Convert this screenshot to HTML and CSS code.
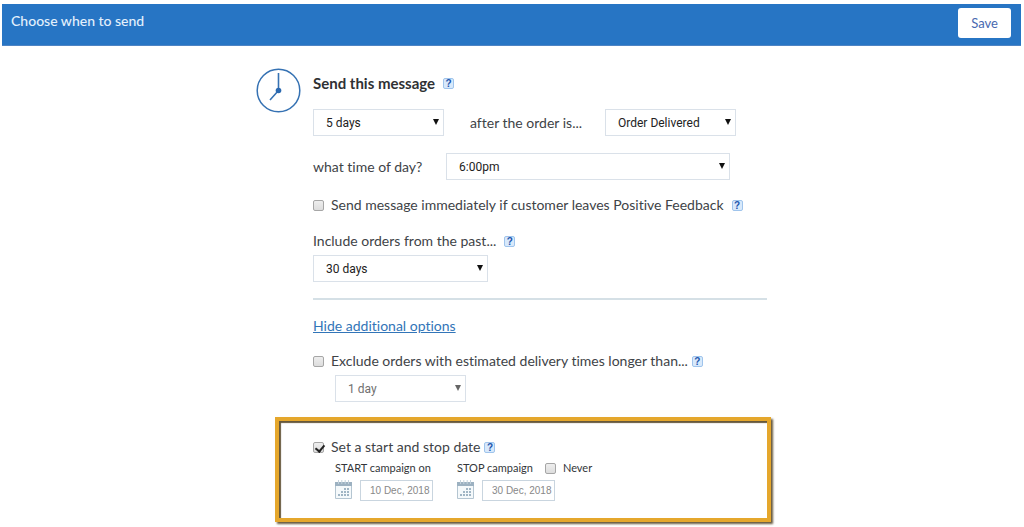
FILE: index.html
```html
<!DOCTYPE html>
<html lang="en">
<head>
<meta charset="utf-8">
<meta name="viewport" content="width=device-width, initial-scale=1">
<title>Choose when to send</title>
<link rel="stylesheet" href="styles.css">
</head>
<body>
<header class="topbar">
  <h1 class="topbar-title">Choose when to send</h1>
  <button class="save" type="button">Save</button>
</header>
<main class="panel">
  <svg class="clock" viewBox="0 0 45 45" aria-hidden="true">
    <circle cx="22.500" cy="22.500" r="21.300" fill="none" stroke="#3672b3" stroke-width="1.500"/>
    <path d="M22.500 5V22.500L14 32" fill="none" stroke="#3672b3" stroke-width="1.600"/>
    <circle cx="22.500" cy="22.500" r="2.800" fill="#2b69b0"/>
  </svg>
  <form class="options">
    <div class="line">
      <h2 class="heading">Send this message</h2>
      <button class="help help-wide" type="button" aria-label="Help with sending">?</button>
    </div>
    <div class="line send-row">
      <span class="select small"><select id="delay" aria-label="Delay"><option>5 days</option></select></span>
      <label class="after" for="event">after the order is...</label>
      <span class="select small"><select id="event"><option>Order Delivered</option></select></span>
    </div>
    <div class="line time-row">
      <label class="time-label" for="time">what time of day?</label>
      <span class="select grow"><select id="time"><option>6:00pm</option></select></span>
    </div>
    <div class="line feedback-row">
      <input class="check" type="checkbox" id="feedback">
      <label for="feedback">Send message immediately if customer leaves Positive Feedback</label>
      <button class="help help-wide" type="button" aria-label="Help with feedback">?</button>
    </div>
    <div class="line past-row">
      <label for="past">Include orders from the past...</label>
      <button class="help help-wide" type="button" aria-label="Help with past orders">?</button>
    </div>
    <span class="select medium"><select id="past"><option>30 days</option></select></span>
    <hr class="rule">
    <div class="line"><a class="toggle" href="#more">Hide additional options</a></div>
    <div class="line exclude-row" id="more">
      <input class="check" type="checkbox" id="exclude">
      <label for="exclude">Exclude orders with estimated delivery times longer than...</label>
      <button class="help" type="button" aria-label="Help with delivery times">?</button>
    </div>
    <span class="select small indent muted"><select aria-label="Delivery time" disabled><option>1 day</option></select></span>
    <section class="highlight">
      <div class="line">
        <input class="check" type="checkbox" id="dates" checked>
        <label for="dates">Set a start and stop date</label>
        <button class="help" type="button" aria-label="Help with dates">?</button>
      </div>
      <div class="dates">
        <div class="date">
          <div class="date-head"><label for="start">START campaign on</label></div>
          <div class="date-field">
            <svg class="calendar" viewBox="0 0 17 19" aria-hidden="true"><path d="M.5 2.500h16v16H.5z" fill="#f5f9fb" stroke="#b4c5d1"/><path d="M0 2h17v4H0z" fill="#9cb1c1"/><path d="M3.500 0v4M6.800 0v4M10.200 0v4M13.500 0v4" stroke="#c3d2dc"/><path d="M9 9h2M12 9h2M6 12h2M9 12h2M12 12h2M3 15h2M6 15h2M9 15h2M12 15h2" stroke="#a0b5c4" stroke-width="2"/></svg>
            <input class="date-input" id="start" type="text" value="10 Dec, 2018">
          </div>
        </div>
        <div class="date">
          <div class="date-head"><label for="stop">STOP campaign</label><input class="check" type="checkbox" id="never"><label for="never">Never</label></div>
          <div class="date-field">
            <svg class="calendar" viewBox="0 0 17 19" aria-hidden="true"><path d="M.5 2.500h16v16H.5z" fill="#f5f9fb" stroke="#b4c5d1"/><path d="M0 2h17v4H0z" fill="#9cb1c1"/><path d="M3.500 0v4M6.800 0v4M10.200 0v4M13.500 0v4" stroke="#c3d2dc"/><path d="M9 9h2M12 9h2M6 12h2M9 12h2M12 12h2M3 15h2M6 15h2M9 15h2M12 15h2" stroke="#a0b5c4" stroke-width="2"/></svg>
            <input class="date-input" id="stop" type="text" value="30 Dec, 2018">
          </div>
        </div>
      </div>
    </section>
  </form>
</main>
</body>
</html>
```
FILE: styles.css
```css
* { box-sizing: border-box; }
body {
  margin: 4px 3px 0 2px;
  background: #fff;
  color: #404347;
  font: 14px/20px Lato, "Open Sans", sans-serif;
  font-variant-ligatures: none;
}
button, input, select { margin: 0; font: inherit; }
.topbar {
  display: flex;
  align-items: center;
  justify-content: space-between;
  padding: 4px 10px 8px 9px;
  background: #2775c4;
  box-shadow: inset 0 -1px #4e84c4;
}
.topbar-title {
  margin: 0;
  padding-bottom: 4px;
  color: #e3f0fc;
  font-size: 14px;
  font-weight: 500;
}
.save {
  padding: 5px 13px;
  border: 0;
  border-radius: 3px;
  background: #fff;
  color: #4869b0;
  font-size: 13px;
}
.panel {
  display: flex;
  gap: 12px;
  max-width: 511px;
  margin: 0 auto;
  padding: 22px 0 5px;
}
.clock { flex: none; width: 45px; height: 45px; }
.options {
  flex: 1;
  display: flex;
  flex-direction: column;
  align-items: flex-start;
  min-width: 0;
  padding-top: 5px;
}
.line { display: flex; align-items: center; }
.heading { margin: 0; color: #2f3134; font-size: 14px; font-weight: 700; }
.line .heading { font-size: 15px; line-height: 20px; }
.help {
  width: 11px;
  height: 11px;
  margin-left: 4px;
  padding: 0;
  border: 1px solid #9fc4ec;
  border-radius: 2px;
  background: #d8e9fb;
  color: #1c55ad;
  font: bold 10px/9px "Liberation Sans", Arial, sans-serif;
  text-align: center;
}
.help-wide { margin-left: 8px; }
.select { position: relative; display: block; }
.select::after {
  content: "";
  position: absolute;
  top: 10px;
  right: 5px;
  width: 6px;
  height: 6px;
  background: #111;
  clip-path: polygon(0 0, 100% 0, 50% 100%);
  pointer-events: none;
}
.select select {
  appearance: none;
  display: block;
  width: 100%;
  height: 27px;
  padding: 0 16px 0 12px;
  border: 1px solid #dae1e9;
  border-radius: 0;
  background: #fff;
  color: #222;
  font: 12px/20px Roboto, Arial, sans-serif;
}
.small { width: 131px; }
.medium { width: 175px; margin-top: 4px; }
.grow { flex: 1; }
.indent { margin: 4px 0 0 22px; }
.muted select { color: #707070; opacity: 1; }
.muted::after { background: #666; }
.send-row { margin-top: 16px; }
.after { width: 161px; padding-left: 26px; }
.time-row { align-self: stretch; margin: 17px 37px 0 0; }
.time-label { width: 133px; }
.feedback-row { margin-top: 15px; }
.past-row { margin-top: 16px; }
.check {
  appearance: none;
  flex: none;
  width: 11px;
  height: 11px;
  margin-right: 7px;
  border: 1px solid #a6a6a6;
  border-radius: 2px;
  background: linear-gradient(#eee, #ddd);
}
.check:checked::after {
  content: "";
  display: block;
  width: 4px;
  height: 7px;
  margin: 0 0 0 3px;
  border: solid #222;
  border-width: 0 2px 2px 0;
  transform: rotate(40deg);
}
.rule {
  align-self: stretch;
  height: 2px;
  margin: 16px 0;
  border: 0;
  background: #d5e0e6;
}
.toggle { color: #3275b8; text-decoration: underline; }
.exclude-row { margin-top: 15px; }
.highlight {
  align-self: stretch;
  margin: 15px -4px 0 -38px;
  padding: 16px 16px 17px 34px;
  border: 4px solid #e5a72c;
  box-shadow: 2px 2px 2px #66583c, inset 2px 2px 1px #66583c;
}
.dates {
  display: flex;
  gap: 21px;
  margin: 3px 0 0 22px;
  font-size: 11px;
  line-height: 16px;
}
.date { min-width: 101px; }
.date-head { display: flex; align-items: center; color: #33363a; }
.date-head .check { margin-left: 12px; }
.date-field { display: flex; gap: 8px; margin-top: 4px; }
.calendar { width: 17px; height: 19px; }
.date-input {
  width: 73px;
  height: 21px;
  padding: 0 0 0 9px;
  border: 1px solid #c9d5df;
  background: #fff;
  color: #888;
  font: 10px/16px "Liberation Sans", Arial, sans-serif;
}
```
